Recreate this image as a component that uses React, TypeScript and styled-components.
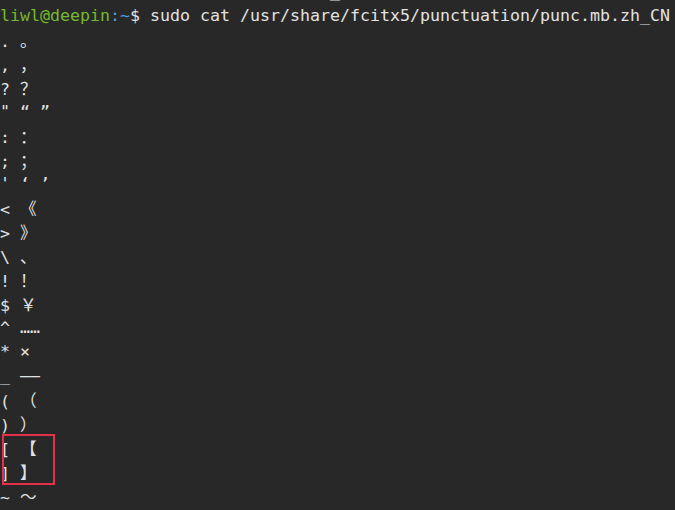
import React from "react";
import styled, { createGlobalStyle } from "styled-components";

const GlobalStyle = createGlobalStyle`
  html, body {
    margin: 0;
    padding: 0;
    background: #282828;
    overflow: hidden;
  }
`;

const Terminal = styled.div`
  position: relative;
  width: 675px;
  height: 510px;
  overflow: hidden;
  background: #282828;
  color: #e2e2e2;
  font-family: "DejaVu Sans Mono", "Noto Sans CJK SC", monospace;
  font-size: 16.61px;
  line-height: 24px;
`;

const Lines = styled.div`
  display: flex;
  flex-direction: column;
  margin-top: -20px;
`;

const Line = styled.div`
  height: 24px;
  white-space: pre;
  overflow: hidden;
`;

const User = styled.span`
  color: #74b82c;
`;

const Dir = styled.span`
  color: #4a9fe0;
`;

const Wide = styled.span`
  display: inline-block;
  width: 20px;
  overflow: visible;
  white-space: pre;
  font-family: "Noto Sans CJK SC", sans-serif;
`;

const Highlight = styled.div`
  position: absolute;
  left: 2px;
  top: 434px;
  width: 53px;
  height: 51px;
  box-sizing: border-box;
  border: 2px solid #e5304b;
  pointer-events: none;
`;

const WIDE = new Set("。，？：；《》、！￥（）【】～".split(""));

const rows: string[] = [
  ". 。",
  ", ，",
  "? ？",
  "\" “ ”",
  ": ：",
  "; ；",
  "' ‘ ’",
  "< 《",
  "> 》",
  "\\ 、",
  "! ！",
  "$ ￥",
  "^ ……",
  "* ×",
  "_ ——",
  "( （",
  ") ）",
  "[ 【",
  "] 】",
  "~ ～",
];

function renderRow(text: string) {
  return Array.from(text).map((ch, i) =>
    WIDE.has(ch) ? <Wide key={i}>{ch}</Wide> : <React.Fragment key={i}>{ch}</React.Fragment>
  );
}

export default function App() {
  return (
    <>
      <GlobalStyle />
      <Terminal>
        <Lines>
          <Line>
            <User>liwl@deepin</User>
            <Dir>:~</Dir>$ sudo cp punc.mb.zh_CN.bak /usr/share/fcitx5/punctuation/punc.mb.zh_
          </Line>
          <Line>
            <User>liwl@deepin</User>
            <Dir>:~</Dir>$ sudo cat /usr/share/fcitx5/punctuation/punc.mb.zh_CN
          </Line>
          {rows.map((r, i) => (
            <Line key={i}>{renderRow(r)}</Line>
          ))}
        </Lines>
        <Highlight />
      </Terminal>
    </>
  );
}
